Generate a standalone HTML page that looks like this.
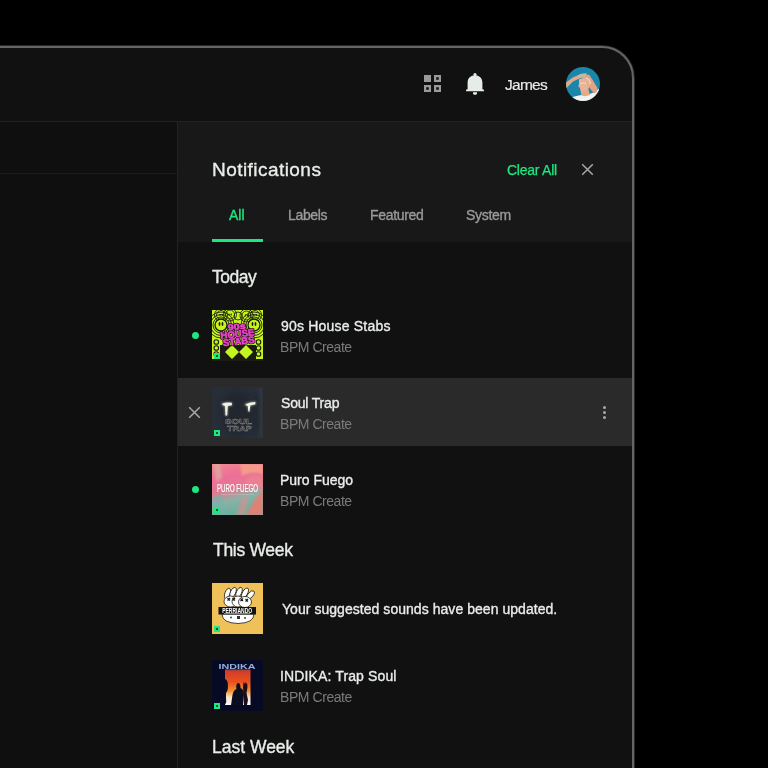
<!DOCTYPE html>
<html><head><meta charset="utf-8">
<style>
*{margin:0;padding:0;box-sizing:border-box}
html,body{width:768px;height:768px;overflow:hidden;background:#000}
body{position:relative;font-family:"Liberation Sans",sans-serif}
.a{position:absolute}
.t{position:absolute;white-space:nowrap;line-height:1;will-change:transform}
#frame{position:absolute;left:-60px;top:46px;width:694px;height:800px;border:2px solid #646464;border-radius:32px;background:#111;overflow:hidden;box-shadow:0 0 0 1px rgba(100,100,100,0.4)}
.thumb{position:absolute;left:212px;width:51px;height:51px;display:block;will-change:transform}
.ind{position:absolute;width:6px;height:6px;background:#1ee87e}
.ind::after{content:"";position:absolute;left:2px;top:2px;width:2px;height:2px;background:#0c5a30}
.dot{position:absolute;left:191.5px;width:7px;height:7px;border-radius:50%;background:#1ee680}
.title{color:#e9ede9;font-size:14px;-webkit-text-stroke:0.35px #e9ede9}
.sub{color:#7b7b7b;font-size:14px}
.hdr{color:#e9ede9;font-size:17.5px;-webkit-text-stroke:0.35px #e9ede9}
.tab{color:#9a9a9a;font-size:14px;-webkit-text-stroke:0.35px currentColor}
</style></head><body>
<div id="frame"></div>
<!-- top bar divider -->
<div class="a" style="left:0;top:121px;width:632px;height:1px;background:#222"></div>
<!-- left area -->
<div class="a" style="left:0;top:122px;width:177px;height:646px;background:#0f0f0f"></div>
<div class="a" style="left:0;top:173px;width:177px;height:1px;background:#1c1c1c"></div>
<div class="a" style="left:177px;top:122px;width:1px;height:646px;background:#222"></div>
<!-- panel header -->
<div class="a" style="left:178px;top:122px;width:454px;height:120px;background:#181818"></div>
<div class="a" style="left:178px;top:242px;width:454px;height:526px;background:#111"></div>
<!-- hovered row -->
<div class="a" style="left:178px;top:378px;width:454px;height:68px;background:#2a2a2a"></div>

<!-- header icons -->
<svg class="a" style="left:418px;top:68px" width="30" height="30" viewBox="0 0 30 30">
<g fill="#9a9a9a">
<rect x="6" y="7" width="7" height="7"/>
<path d="M16 7h7v7h-7zM18.2 9.2v2.6h2.6v-2.6z" fill-rule="evenodd"/>
<path d="M6 17h7v7h-7zM8.2 19.2v2.6h2.6v-2.6z" fill-rule="evenodd"/>
<path d="M16 17h7v7h-7zM18.2 19.2v2.6h2.6v-2.6z" fill-rule="evenodd"/>
</g></svg>
<svg class="a" style="left:460px;top:68px" width="30" height="30" viewBox="0 0 30 30">
<g fill="#e6ece8">
<circle cx="15" cy="6.5" r="1.6"/>
<path d="M7.6 21.2V14.5C7.6 10.2 10.8 7.3 15 7.3S22.4 10.2 22.4 14.5V21.2L24 21.8V23.3H6V21.8Z"/>
<path d="M13 24.2H17V25.4C17 26.2 16 26.8 15 26.8S13 26.2 13 25.4Z"/>
</g></svg>
<div class="t" id="tJames" style="left:504.9px;top:77px;font-size:15.5px;color:#e6e9e6;-webkit-text-stroke:0.2px #e6e9e6;letter-spacing:-0.725px">James</div>
<svg class="a" style="left:566px;top:67px" width="34" height="34" viewBox="0 0 34 34">
<defs><clipPath id="av"><circle cx="17" cy="17" r="17"/></clipPath></defs>
<g clip-path="url(#av)">
<rect width="34" height="34" fill="#1986aa"/>
<path d="M4 31Q13 27.5 21 27.5Q28 26.5 33 21.5L34 34L0 34Z" fill="#f2f2f0"/>
<path d="M14 21.5L22 20.5L24 28Q19 30 15.5 28.5Z" fill="#e5a98a"/>
<path d="M19 8.5L23 7.5Q27.5 14 31.5 21Q31.5 25.5 28 26.5Q24 22 20.5 16Z" fill="#e2a283"/>
<ellipse cx="19" cy="17" rx="5" ry="6.5" fill="#e6b090"/><path d="M13 12.5Q16 10.5 19 11.5Q21.5 15 21.5 19Q21 23.5 18 24Q15 24 14 21L12.3 19.3L13 17Z" fill="#e9b496"/><path d="M20 11Q24 12 24.5 17" stroke="#f0e6dc" stroke-width="1.2" fill="none" opacity="0.8"/>
<path d="M14 16.5Q17 15.5 20 16.5" stroke="#f4e2d6" stroke-width="0.8" fill="none"/>
<path d="M0 15.5L7.5 10L12 8.5L13.5 11.5L7 14.5L0 21.5Z" fill="#e4a787"/>
<path d="M10.5 9Q15 5.5 21 6.5L19.5 11Q16 10 12 12Z" fill="#c9b6a0"/>
</g></svg>

<!-- panel header text -->
<div class="t hdr" id="tNotif" style="left:212px;top:160px;font-size:19px;letter-spacing:0.45px">Notifications</div>
<div class="t" id="tClear" style="left:507px;top:163px;font-size:14px;color:#1ee680;-webkit-text-stroke:0.25px #1ee680;letter-spacing:-0.25px">Clear All</div>
<svg class="a" style="left:581px;top:163px" width="13" height="13" viewBox="0 0 13 13">
<path d="M1.2 1.2L11.8 11.8M11.8 1.2L1.2 11.8" stroke="#a8a8a8" stroke-width="1.5"/></svg>
<div class="t tab" id="tAll" style="left:229px;top:208px;color:#1ee680">All</div>
<div class="t tab" id="tLabels" style="left:288px;top:208px;letter-spacing:-0.34px">Labels</div>
<div class="t tab" id="tFeat" style="left:370px;top:208px;letter-spacing:-0.314px">Featured</div>
<div class="t tab" id="tSys" style="left:466px;top:208px;letter-spacing:-0.28px">System</div>
<div class="a" style="left:212px;top:239px;width:51px;height:3px;background:#1ee680"></div>

<!-- Today -->
<div class="t hdr" id="tToday" style="left:212px;top:269px;letter-spacing:-0.475px">Today</div>

<!-- row 1 -->
<div class="dot" style="top:332px"></div>
<svg class="thumb" style="top:310px" viewBox="0 0 51 51">
<rect width="51" height="51" fill="#c6f41e"/>
<g fill="none" stroke="#22280e" stroke-width="0.9">
<circle cx="9" cy="5" r="4.5"/><circle cx="9" cy="5" r="6.5"/>
<circle cx="18" cy="4.5" r="4.5"/><circle cx="18" cy="4.5" r="6.5"/>
<circle cx="34.5" cy="5.5" r="4.5"/><circle cx="34.5" cy="5.5" r="6.5"/>
<circle cx="43" cy="5" r="4.5"/><circle cx="43" cy="5" r="6.5"/>
<circle cx="26" cy="6" r="4"/>
<circle cx="9" cy="15" r="8"/><circle cx="9" cy="15" r="10.5"/><circle cx="9" cy="15" r="13"/>
<circle cx="42" cy="15" r="8"/><circle cx="42" cy="15" r="10.5"/><circle cx="42" cy="15" r="13"/>
</g>
<circle cx="9" cy="15" r="6" fill="#c6f41e" stroke="#1a1e0c" stroke-width="1.3"/>
<circle cx="42" cy="15" r="6" fill="#c6f41e" stroke="#1a1e0c" stroke-width="1.3"/>
<g fill="#141710"><ellipse cx="7.5" cy="14" rx="0.9" ry="2"/><ellipse cx="10.5" cy="14" rx="0.9" ry="2"/>
<ellipse cx="40.5" cy="14" rx="0.9" ry="2"/><ellipse cx="43.5" cy="14" rx="0.9" ry="2"/>
<ellipse cx="8" cy="5" rx="0.7" ry="1.1"/><ellipse cx="10.2" cy="5" rx="0.7" ry="1.1"/>
<ellipse cx="17" cy="4.5" rx="0.7" ry="1.1"/><ellipse cx="19.2" cy="4.5" rx="0.7" ry="1.1"/>
<ellipse cx="33.5" cy="5.5" rx="0.7" ry="1.1"/><ellipse cx="35.7" cy="5.5" rx="0.7" ry="1.1"/>
<ellipse cx="42" cy="5" rx="0.7" ry="1.1"/><ellipse cx="44.2" cy="5" rx="0.7" ry="1.1"/></g>
<rect x="8" y="35" width="36" height="16" fill="#1a1c12"/>
<rect x="0" y="49" width="51" height="2" fill="#1a1c12"/>
<path d="M20 35L27 42L20 49L13 42ZM34 35L41 42L34 49L27 42Z" fill="#c6f41e"/>
<g fill="none" stroke="#1a1c12" stroke-width="1.1">
<circle cx="4.3" cy="32" r="2.3"/><circle cx="4.3" cy="38" r="2.3"/><circle cx="4.3" cy="44" r="2.3"/>
<circle cx="46.5" cy="32" r="2.3"/><circle cx="46.5" cy="38" r="2.3"/><circle cx="46.5" cy="44" r="2.3"/>
</g>
<g transform="translate(0.5 -1.5) rotate(-6 26 26)" font-family="Liberation Sans" font-weight="bold" text-anchor="middle">
<g fill="#e646c6" stroke="#1a0e14" stroke-width="2" stroke-linejoin="round">
<text x="25" y="21" font-size="8.5" textLength="18" lengthAdjust="spacingAndGlyphs">90s</text>
<text x="25" y="28.5" font-size="9.5" textLength="34" lengthAdjust="spacingAndGlyphs">HOUSE</text>
<text x="25.5" y="36" font-size="9.5" textLength="32" lengthAdjust="spacingAndGlyphs">STABS</text>
</g>
<g fill="#e848c8" stroke="#e848c8" stroke-width="0.6" stroke-linejoin="round">
<text x="25" y="21" font-size="8.5" textLength="18" lengthAdjust="spacingAndGlyphs">90s</text>
<text x="25" y="28.5" font-size="9.5" textLength="34" lengthAdjust="spacingAndGlyphs">HOUSE</text>
<text x="25.5" y="36" font-size="9.5" textLength="32" lengthAdjust="spacingAndGlyphs">STABS</text>
</g></g>
</svg>
<div class="ind" style="left:214px;top:353px"></div>
<div class="t title" id="tR1" style="left:280.9px;top:319px;letter-spacing:0.2px">90s House Stabs</div>
<div class="t sub" id="sR1" style="left:280px;top:340px;letter-spacing:-0.456px">BPM Create</div>

<!-- row 2 (hover) -->
<svg class="a" style="left:188px;top:406px" width="13" height="13" viewBox="0 0 13 13">
<path d="M1.2 1.2L11.8 11.8M11.8 1.2L1.2 11.8" stroke="#a8a8a8" stroke-width="1.5"/></svg>
<svg class="thumb" style="top:387px" viewBox="0 0 51 51">
<defs><filter id="glow" x="-50%" y="-50%" width="200%" height="200%"><feGaussianBlur stdDeviation="0.9"/></filter>
<filter id="sb"><feGaussianBlur stdDeviation="2"/></filter></defs>
<rect width="51" height="51" fill="#272e38"/>
<g filter="url(#sb)">
<ellipse cx="25" cy="26" rx="17" ry="22" fill="#20262e"/>
<rect x="44" y="6" width="4" height="40" fill="#1a1f26"/>
<rect x="47" y="0" width="4" height="51" fill="#313a44"/>
</g>
<g fill="#dfe6d8" opacity="0.5" filter="url(#glow)">
<path d="M9 16.5Q14 14 20 15.5L20.5 18.5L16 19.5L15.5 29H13L12.5 19.5Q10 19 9 16.5Z"/>
<path d="M32 17Q38 14 44 14.5L44 17.5L38.5 19L37.5 25H36L35.5 19.5Q33 19 32 17Z"/>
</g>
<path d="M10 16.8Q14.5 14.8 19.8 15.8L20 18.3L15.8 19L15.2 28.5H13.5L13 19Q10.8 18.8 10 16.8Z" fill="#f2f2e2"/>
<path d="M33.5 17.3Q38 15 43.3 15L43.3 17.3L38.3 18.6L37.5 24.5H36.3L35.8 19Q34 18.8 33.5 17.3Z" fill="#f2f2e2"/>
<g font-family="Liberation Sans" font-weight="bold" fill="none" stroke="#8a8a86" stroke-width="0.45" text-anchor="middle">
<text x="26.5" y="37" font-size="8" textLength="27" lengthAdjust="spacingAndGlyphs">SOUL</text>
<text x="27.5" y="44" font-size="8" textLength="25" lengthAdjust="spacingAndGlyphs">TRAP</text>
</g>
</svg>
<div class="ind" style="left:214px;top:430px"></div>
<div class="t title" id="tR2" style="left:280.5px;top:396px;letter-spacing:-0.188px">Soul Trap</div>
<div class="t sub" id="sR2" style="left:280px;top:417px;letter-spacing:-0.456px">BPM Create</div>
<svg class="a" style="left:598px;top:402px" width="13" height="21" viewBox="0 0 13 21">
<g fill="#a8a8a8"><circle cx="6.5" cy="5.5" r="1.5"/><circle cx="6.5" cy="10.5" r="1.5"/><circle cx="6.5" cy="15.5" r="1.5"/></g></svg>

<!-- row 3 -->
<div class="dot" style="top:486px"></div>
<svg class="thumb" style="top:464px" viewBox="0 0 51 51">
<defs><linearGradient id="pfg" x1="0" y1="0" x2="0.25" y2="1">
<stop offset="0" stop-color="#f08a92"/><stop offset="0.3" stop-color="#ee6e98"/><stop offset="0.55" stop-color="#e27a92"/><stop offset="0.75" stop-color="#8fb0a6"/><stop offset="1" stop-color="#6cb0a2"/></linearGradient>
<filter id="pfb"><feGaussianBlur stdDeviation="1.2"/></filter></defs>
<rect width="51" height="51" fill="url(#pfg)"/>
<g filter="url(#pfb)">
<path d="M2 0L8 0L10 14L4 18Z" fill="#d8b0a4" opacity="0.7"/>
<path d="M28 0L51 0L51 10Q40 6 30 12Z" fill="#f4a08a" opacity="0.9"/>
<path d="M34 14Q44 8 51 14L51 26Q42 20 34 22Z" fill="#f08090" opacity="0.8"/>
<path d="M51 26L51 51L34 51Q40 38 51 26Z" fill="#f07a6e" opacity="0.85"/>
<path d="M24 51L30 34L36 33L33 51Z" fill="#e8888a" opacity="0.6"/>
<path d="M0 34L10 30L14 51L0 51Z" fill="#70b4a8" opacity="0.6"/>
</g>
<text x="25.5" y="28" font-family="Liberation Sans" font-size="11" fill="#fff" stroke="#fff" stroke-width="0.2" text-anchor="middle" textLength="41" lengthAdjust="spacingAndGlyphs">PURO FUEGO</text>
<rect x="9" y="30" width="33" height="0.8" fill="#fff" opacity="0.22"/>
</svg>
<div class="ind" style="left:214px;top:507px"></div>
<div class="t title" id="tR3" style="left:280px;top:473px">Puro Fuego</div>
<div class="t sub" id="sR3" style="left:280px;top:494px;letter-spacing:-0.456px">BPM Create</div>

<!-- This Week -->
<div class="t hdr" id="tThis" style="left:212.7px;top:542px;letter-spacing:-0.3px">This Week</div>

<!-- row 4 -->
<svg class="thumb" style="top:583px" viewBox="0 0 51 51">
<rect width="51" height="51" fill="#f0c158"/>
<g fill="#fff" stroke="#1a1a1a" stroke-width="0.8">
<ellipse cx="15.5" cy="10.5" rx="2.6" ry="5.5" transform="rotate(20 15.5 10.5)"/>
<ellipse cx="21" cy="9.5" rx="2.6" ry="5.5" transform="rotate(25 21 9.5)"/>
<ellipse cx="27" cy="9.5" rx="2.6" ry="5.5" transform="rotate(25 27 9.5)"/>
<ellipse cx="33" cy="10" rx="2.6" ry="5.5" transform="rotate(30 33 10)"/>
<ellipse cx="38.5" cy="12" rx="2.5" ry="5" transform="rotate(40 38.5 12)"/>
<path d="M10 31Q10 40 26 40.5Q42 40 42 31Z"/>
<ellipse cx="18.5" cy="18.5" rx="6.5" ry="5.5"/>
<ellipse cx="26" cy="18.5" rx="6" ry="5.5"/>
<ellipse cx="33" cy="19" rx="6.5" ry="5.5"/>
</g>
<g stroke="#1a1a1a" stroke-width="1.1">
<path d="M15.5 15l2.5 2.5M18 15l-2.5 2.5M20.5 15l2.5 2.5M23 15l-2.5 2.5M28.5 15.5l2.5 2.5M31 15.5l-2.5 2.5M33.5 16l2.5 2.5M36 16l-2.5 2.5"/>
</g>
<g fill="#333"><circle cx="19" cy="34.5" r="0.9"/><circle cx="33" cy="35" r="0.9"/><path d="M25 33h3v3h-3z"/></g>
<rect x="6.5" y="24" width="37.5" height="7.5" fill="#141414"/>
<text x="25.2" y="29.6" font-family="Liberation Sans" font-weight="bold" font-size="6.8" fill="#fff" text-anchor="middle" textLength="30" lengthAdjust="spacingAndGlyphs">PERRIANDO</text>
<rect x="12" y="30.2" width="26" height="0.8" fill="#c9a040"/>
</svg>
<div class="ind" style="left:214px;top:626px"></div>
<div class="t title" id="tR4" style="left:281.6px;top:602px;letter-spacing:0.044px">Your suggested sounds have been updated.</div>

<!-- row 5 -->
<svg class="thumb" style="top:660px" viewBox="0 0 51 51">
<defs><linearGradient id="ig" x1="0" y1="0" x2="0" y2="1">
<stop offset="0" stop-color="#cf3a2a"/><stop offset="0.35" stop-color="#ea5020"/><stop offset="0.6" stop-color="#f3902a"/><stop offset="0.78" stop-color="#fbe2c8"/><stop offset="1" stop-color="#fff"/></linearGradient></defs>
<rect width="51" height="51" fill="#060a24"/>
<rect x="13" y="9.5" width="25.5" height="35.5" fill="url(#ig)"/>
<path d="M13 19Q16 20 16 26Q16 31 14 33L14 38Q15 42 13 45Z" fill="#0a0c22"/>
<path d="M19 45L20.5 35Q21.5 30 24.5 29Q23.5 24 26 23Q28.5 23 28.5 28Q31.5 29 32 34L31 45Z" fill="#0b0d20"/>
<path d="M31 27L31.5 22L32.5 24L33 21.5L34 24L35 22.5L35.5 27L34.5 33L36 40L35 45L32 45L31.5 35Z" fill="#1a0e1e"/>
<text x="25" y="9" font-family="Liberation Sans" font-weight="bold" font-size="7.5" fill="#94aee0" text-anchor="middle" textLength="37" lengthAdjust="spacingAndGlyphs">INDIKA</text>
<rect x="16" y="10.5" width="19" height="0.8" fill="#6a5050" opacity="0.7"/>
</svg>
<div class="ind" style="left:214px;top:703px"></div>
<div class="t title" id="tR5" style="left:280px;top:669px;letter-spacing:0.131px">INDIKA: Trap Soul</div>
<div class="t sub" id="sR5" style="left:280px;top:690px;letter-spacing:-0.433px">BPM Create</div>

<!-- Last Week -->
<div class="t hdr" id="tLast" style="left:212px;top:739px">Last Week</div>
</body></html>
